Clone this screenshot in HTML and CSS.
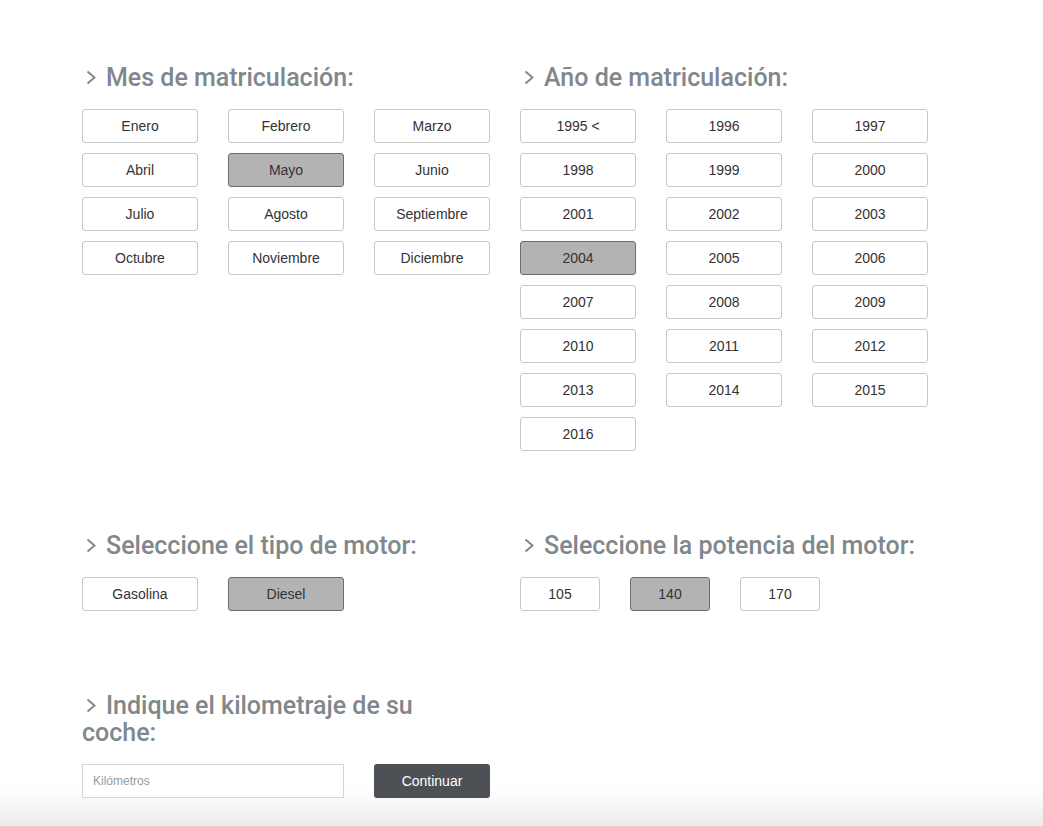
FILE: index.html
```html
<!DOCTYPE html>
<html lang="es">
<head>
<meta charset="utf-8">
<title>Matriculación</title>
<link rel="stylesheet" href="styles.css">
</head>
<body>
<main class="page">
  <div class="grid">
    <section class="section">
      <h2 class="title"><svg class="chev" viewBox="0 0 10 15" width="10" height="15"><polyline points="1.5,1.5 8.5,7.5 1.5,13.5"/></svg>Mes de matriculación:</h2>
      <div class="opts">
        <button class="opt">Enero</button>
        <button class="opt">Febrero</button>
        <button class="opt">Marzo</button>
        <button class="opt">Abril</button>
        <button class="opt sel">Mayo</button>
        <button class="opt">Junio</button>
        <button class="opt">Julio</button>
        <button class="opt">Agosto</button>
        <button class="opt">Septiembre</button>
        <button class="opt">Octubre</button>
        <button class="opt">Noviembre</button>
        <button class="opt">Diciembre</button>
      </div>
    </section>
    <section class="section">
      <h2 class="title"><svg class="chev" viewBox="0 0 10 15" width="10" height="15"><polyline points="1.5,1.5 8.5,7.5 1.5,13.5"/></svg>Año de matriculación:</h2>
      <div class="opts">
        <button class="opt">1995 &lt;</button>
        <button class="opt">1996</button>
        <button class="opt">1997</button>
        <button class="opt">1998</button>
        <button class="opt">1999</button>
        <button class="opt">2000</button>
        <button class="opt">2001</button>
        <button class="opt">2002</button>
        <button class="opt">2003</button>
        <button class="opt sel">2004</button>
        <button class="opt">2005</button>
        <button class="opt">2006</button>
        <button class="opt">2007</button>
        <button class="opt">2008</button>
        <button class="opt">2009</button>
        <button class="opt">2010</button>
        <button class="opt">2011</button>
        <button class="opt">2012</button>
        <button class="opt">2013</button>
        <button class="opt">2014</button>
        <button class="opt">2015</button>
        <button class="opt">2016</button>
      </div>
    </section>
    <section class="section">
      <h2 class="title"><svg class="chev" viewBox="0 0 10 15" width="10" height="15"><polyline points="1.5,1.5 8.5,7.5 1.5,13.5"/></svg>Seleccione el tipo de motor:</h2>
      <div class="opts">
        <button class="opt">Gasolina</button>
        <button class="opt sel">Diesel</button>
      </div>
    </section>
    <section class="section">
      <h2 class="title"><svg class="chev" viewBox="0 0 10 15" width="10" height="15"><polyline points="1.5,1.5 8.5,7.5 1.5,13.5"/></svg>Seleccione la potencia del motor:</h2>
      <div class="opts small">
        <button class="opt">105</button>
        <button class="opt sel">140</button>
        <button class="opt">170</button>
      </div>
    </section>
    <section class="section">
      <h2 class="title"><svg class="chev" viewBox="0 0 10 15" width="10" height="15"><polyline points="1.5,1.5 8.5,7.5 1.5,13.5"/></svg>Indique el kilometraje de su coche:</h2>
      <div class="km">
        <input class="km-input" type="text" placeholder="Kilómetros">
        <button class="go">Continuar</button>
      </div>
    </section>
  </div>
</main>
</body>
</html>
```

FILE: styles.css
```css
html {
  height: 100%;
  background: linear-gradient(to bottom, #ffffff 0, #ffffff 788px, #ebebeb 826px);
}
body {
  margin: 0;
  min-height: 100%;
  font-family: "Liberation Sans", Arial, sans-serif;
  color: #333;
}
.page {
  padding: 64px 0 0 82px;
}
.grid {
  display: grid;
  grid-template-columns: 408px 408px;
  column-gap: 30px;
  row-gap: 81px;
  align-items: start;
}
.title {
  margin: 0 0 18px;
  font-family: Roboto, "Liberation Sans", Arial, sans-serif;
  font-size: 25px;
  line-height: 27px;
  font-weight: 500;
  color: #80878d;
}
.chev {
  display: inline-block;
  vertical-align: 1px;
  margin: 0 10px 0 4px;
  fill: none;
  stroke: #80878d;
  stroke-width: 2;
}
.opts {
  display: grid;
  grid-template-columns: repeat(3, 116px);
  column-gap: 30px;
  row-gap: 10px;
}
.opts.small {
  grid-template-columns: repeat(3, 80px);
}
.opt {
  height: 34px;
  padding: 0;
  border: 1px solid #c8c8c8;
  border-radius: 3px;
  background: #fff;
  font-family: inherit;
  font-size: 14px;
  color: #333;
  cursor: pointer;
}
.opt.sel {
  background: #b3b3b3;
  border-color: #6e6e6e;
}
.km {
  display: flex;
  gap: 30px;
}
.km-input {
  box-sizing: border-box;
  width: 262px;
  height: 34px;
  padding: 0 10px;
  border: 1px solid #d6d6d6;
  border-radius: 0;
  font-family: inherit;
  font-size: 12px;
  color: #333;
  outline: none;
  background: #fff;
}
.km-input::placeholder {
  color: #9a9a9a;
}
.go {
  width: 116px;
  height: 34px;
  border: none;
  border-radius: 3px;
  background: #4d5055;
  color: #fff;
  font-family: inherit;
  font-size: 14px;
}
```
